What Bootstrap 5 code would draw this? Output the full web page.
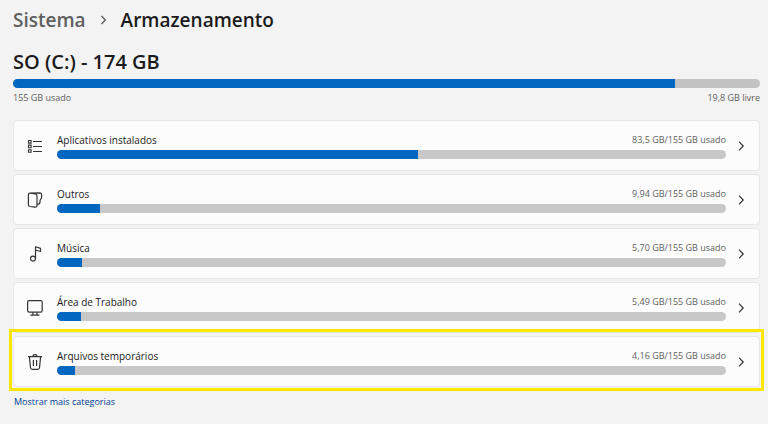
<!DOCTYPE html>
<html lang="pt-BR">
<head>
<meta charset="utf-8">
<meta name="viewport" content="width=device-width, initial-scale=1">
<title>Armazenamento</title>
<link href="https://cdn.jsdelivr.net/npm/bootstrap@5.3.0/dist/css/bootstrap.min.css" rel="stylesheet">
<style>
body{background:#f3f3f3;color:#1b1b1b;font-family:"Segoe UI","Open Sans","Noto Sans",sans-serif;font-size:10px;line-height:14px}
main{padding:8px 8px 8px 13px}
.crumbs{font-size:19px;line-height:24px;font-weight:600;gap:13px}
.crumbs a{color:#5f5f5f}
.volume{font-size:20px;line-height:24px;font-weight:600;margin:18px 0 5px}
.progress{height:9px;border-radius:5px;background:#c8c8c8}
.progress-bar{background:#0067c0}
.muted{color:#606060;font-size:9px;line-height:14px}
.legend{margin-top:3px}
.volume-bar{background:#c2c2c2}
.entries{gap:3px;margin-top:15px}
.entry{height:51px;background:#fcfcfc;border:1px solid #e6e6e6;border-radius:4px;color:#1b1b1b;padding:0 13px 0 11px}
.entry svg{flex:none}
.entry .glyph{width:20px;height:20px;margin-right:12px}
.entry .chev{margin-left:10px}
.entry-head{margin-bottom:3px}
.highlight{position:absolute;inset:-8px -5px -5px -5px;border:3px solid #ffe600;pointer-events:none}
.more{color:#003e92;font-size:9px;margin:8px 0 0 1px}
</style>
<script src="https://cdn.jsdelivr.net/npm/bootstrap@5.3.0/dist/js/bootstrap.bundle.min.js" defer></script>
</head>
<body>
<main>
<nav class="crumbs d-flex align-items-center" aria-label="Trilha">
<a href="#" class="text-decoration-none">Sistema</a>
<svg width="9" height="12" viewBox="0 0 9 12" fill="none" stroke="#5f5f5f" stroke-width="1.4" aria-hidden="true"><path d="M2.5 2 6.3 6 2.5 10"/></svg>
<h1 class="crumbs mb-0">Armazenamento</h1>
</nav>
<h2 class="volume">SO (C:) - 174 GB</h2>
<div class="progress volume-bar" role="progressbar" aria-label="Espaço usado"><div class="progress-bar" style="width:88.6%"></div></div>
<div class="legend muted d-flex justify-content-between"><span>155 GB usado</span><span>19,8 GB livre</span></div>
<div class="entries d-flex flex-column">
<a href="#" class="entry d-flex align-items-center text-decoration-none">
<svg class="glyph" viewBox="0 0 20 20" fill="none" stroke="#333" aria-hidden="true"><path d="M3.5 4.5h2.6v2.6H3.5zM3.5 9.1h2.6v2.6H3.5zM3.5 13.7h2.6v2.6H3.5z" stroke-width="1.1"/><path d="M8 5.5h9M8 10.5h9M8 15.5h9"/></svg>
<span class="flex-grow-1"><span class="entry-head d-flex justify-content-between"><span>Aplicativos instalados</span><span class="muted">83,5 GB/155 GB usado</span></span><span class="progress"><span class="progress-bar" style="width:54%"></span></span></span>
<svg class="chev" width="10" height="12" viewBox="0 0 10 12" fill="none" stroke="#333" stroke-width="1.2" aria-hidden="true"><path d="M3 1.7 7.2 6 3 10.3"/></svg></a>
<a href="#" class="entry d-flex align-items-center text-decoration-none">
<svg class="glyph" viewBox="0 0 20 20" fill="none" stroke="#333" stroke-width="1.2" stroke-linejoin="round" aria-hidden="true"><path d="M5 3.2 10.5 4Q12 4.3 12 6v9.5Q12 17.4 10 17.2L5 16.5Q3.4 16.2 3.4 14.5V5Q3.4 3 5 3.1L14.6 2.8Q16.6 2.8 16.6 4.8V7.5Q16.6 8.3 15.8 9.2Q15 10 15 11V12Q15 14.2 12.2 14.5"/></svg>
<span class="flex-grow-1"><span class="entry-head d-flex justify-content-between"><span>Outros</span><span class="muted">9,94 GB/155 GB usado</span></span><span class="progress"><span class="progress-bar" style="width:6.4%"></span></span></span>
<svg class="chev" width="10" height="12" viewBox="0 0 10 12" fill="none" stroke="#333" stroke-width="1.2" aria-hidden="true"><path d="M3 1.7 7.2 6 3 10.3"/></svg></a>
<a href="#" class="entry d-flex align-items-center text-decoration-none">
<svg class="glyph" viewBox="0 0 20 20" fill="none" stroke="#333" stroke-width="1.2" stroke-linejoin="round" aria-hidden="true"><circle cx="8" cy="14.6" r="2.5"/><path d="M10.5 14.6V2.8L15.5 4.4V7.5L10.5 6"/></svg>
<span class="flex-grow-1"><span class="entry-head d-flex justify-content-between"><span>Música</span><span class="muted">5,70 GB/155 GB usado</span></span><span class="progress"><span class="progress-bar" style="width:3.7%"></span></span></span>
<svg class="chev" width="10" height="12" viewBox="0 0 10 12" fill="none" stroke="#333" stroke-width="1.2" aria-hidden="true"><path d="M3 1.7 7.2 6 3 10.3"/></svg></a>
<a href="#" class="entry d-flex align-items-center text-decoration-none">
<svg class="glyph" viewBox="0 0 20 20" fill="none" stroke="#333" stroke-width="1.2" aria-hidden="true"><rect x="2.6" y="2.6" width="14.6" height="11.6" rx="1.6"/><path d="M7.8 14.2V17M12 14.2V17M5.3 17.2h9.2"/></svg>
<span class="flex-grow-1"><span class="entry-head d-flex justify-content-between"><span>Área de Trabalho</span><span class="muted">5,49 GB/155 GB usado</span></span><span class="progress"><span class="progress-bar" style="width:3.6%"></span></span></span>
<svg class="chev" width="10" height="12" viewBox="0 0 10 12" fill="none" stroke="#333" stroke-width="1.2" aria-hidden="true"><path d="M3 1.7 7.2 6 3 10.3"/></svg></a>
<a href="#" class="entry position-relative d-flex align-items-center text-decoration-none">
<svg class="glyph" viewBox="0 0 20 20" fill="none" stroke="#333" stroke-width="1.2" aria-hidden="true"><path d="M3 4.6h14M8 4.4Q8 2.6 10 2.6T12 4.4M4.4 4.6 5.5 15.8Q5.7 17.4 7.2 17.4h5.6Q14.3 17.4 14.5 15.8L15.6 4.6M8.4 8v6M11.6 8v6"/></svg>
<span class="flex-grow-1"><span class="entry-head d-flex justify-content-between"><span>Arquivos temporários</span><span class="muted">4,16 GB/155 GB usado</span></span><span class="progress"><span class="progress-bar" style="width:2.7%"></span></span></span>
<svg class="chev" width="10" height="12" viewBox="0 0 10 12" fill="none" stroke="#333" stroke-width="1.2" aria-hidden="true"><path d="M3 1.7 7.2 6 3 10.3"/></svg>
<span class="highlight"></span></a>
</div>
<a href="#" class="more d-inline-block text-decoration-none">Mostrar mais categorias</a>
</main>
</body>
</html>
